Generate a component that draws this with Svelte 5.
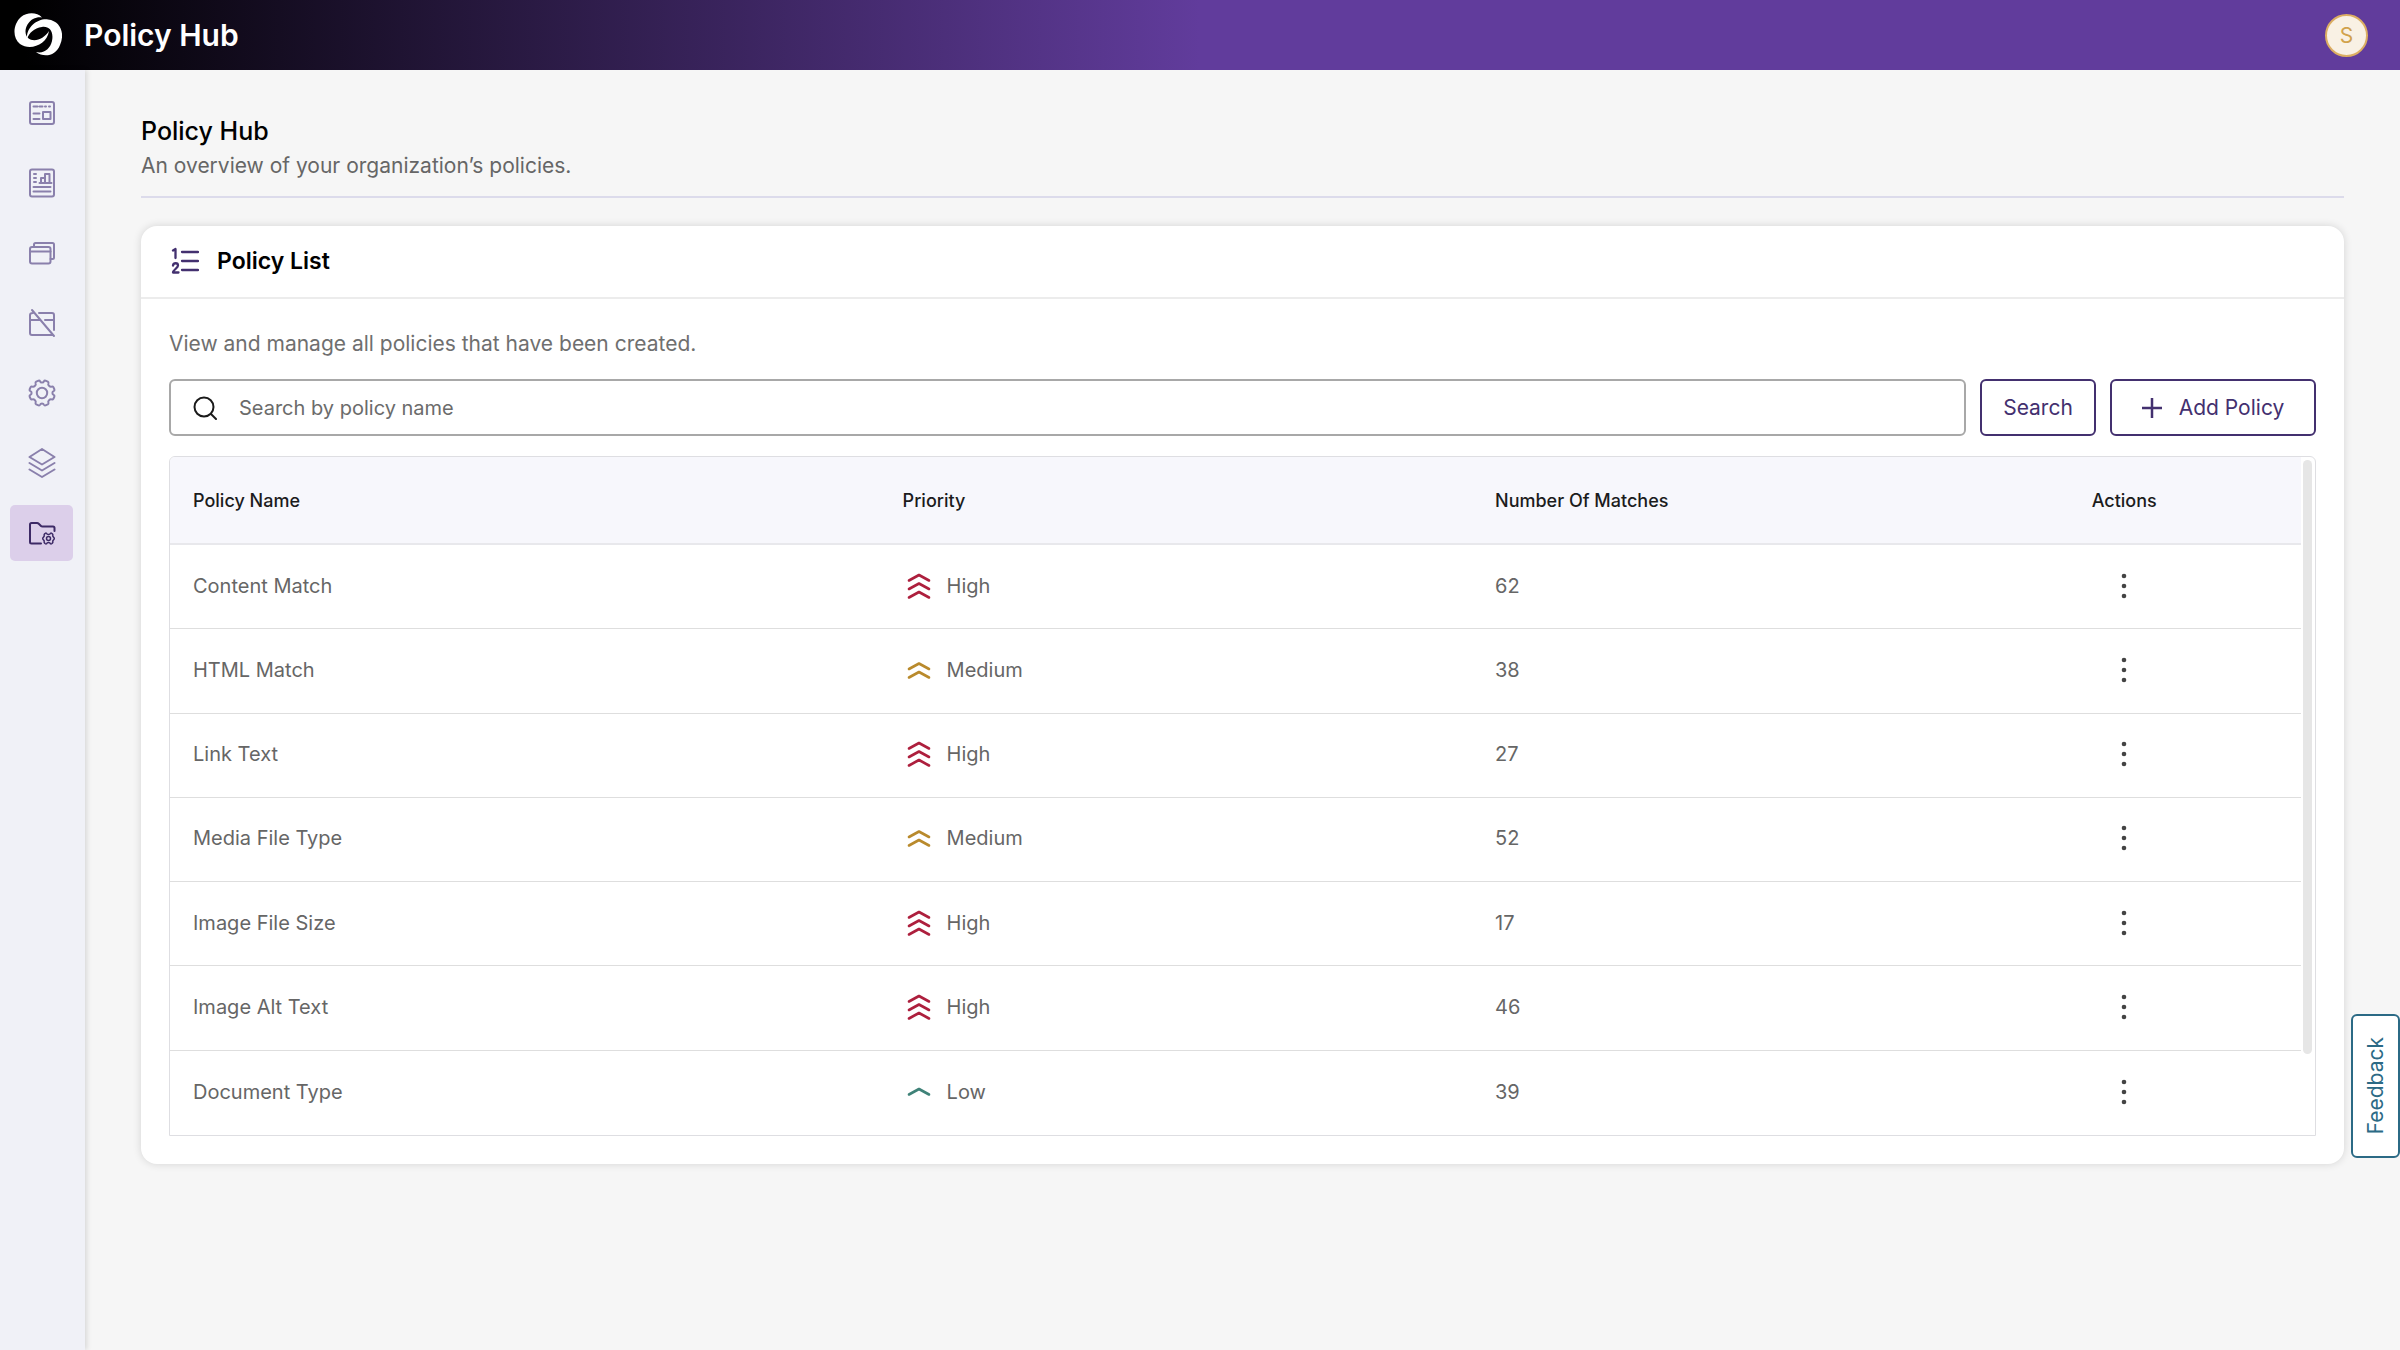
<script>
  const nav = [
    { id: 'dashboard', label: 'Dashboard' },
    { id: 'reports', label: 'Reports' },
    { id: 'pages', label: 'Pages' },
    { id: 'blocked', label: 'Excluded pages' },
    { id: 'settings', label: 'Settings' },
    { id: 'layers', label: 'Layers' },
    { id: 'policies', label: 'Policy Hub', active: true },
  ];

  const policies = [
    { name: 'Content Match', priority: 'High', matches: 62 },
    { name: 'HTML Match', priority: 'Medium', matches: 38 },
    { name: 'Link Text', priority: 'High', matches: 27 },
    { name: 'Media File Type', priority: 'Medium', matches: 52 },
    { name: 'Image File Size', priority: 'High', matches: 17 },
    { name: 'Image Alt Text', priority: 'High', matches: 46 },
    { name: 'Document Type', priority: 'Low', matches: 39 },
  ];

  // One chevron per level, stacked from the top of the icon down.
  const chevrons = { High: [3, 11.5, 20], Medium: [7.5, 16], Low: [11] };
</script>

<div class="app">
  <header class="topbar">
    <svg class="logo" viewBox="0 0 48 44" aria-hidden="true">
      <path d="M28 4.500C23-1 13-1 7 4C-1 11-2 25 6 31C16 38 33 32 35 18C30 26 20 30 14 25C9 20 12 10 19 6C22 4.500 25 4 28 4.500Z" />
      <path d="M13 26C12 14 24 5 34 6.500C47 8 51 21 46 32C42 43 30 45 22 39C30 41 36 36 38 28C40 18 35 13 28 14C20 15 15 20 13 26Z" />
    </svg>
    <span class="brand">Policy Hub</span>
    <button class="avatar" aria-label="Account">S</button>
  </header>

  <div class="body">
    <nav class="sidebar" aria-label="Main">
      {#each nav as item (item.id)}
        <a href={`#${item.id}`} class="nav-item" class:active={item.active} aria-label={item.label}>
          <svg viewBox="0 0 28 30" aria-hidden="true">
            {#if item.id === 'dashboard'}
              <rect x="2" y="4" width="24" height="22" rx="2" />
              <path d="M5.500 8.500h4M11.500 8.500h3M17 8.500h1M21 8.500h1M5.500 15.500h6M5.500 21h6M15 14h7.500v7h-7.500z" />
            {:else if item.id === 'reports'}
              <rect x="2" y="1.500" width="24" height="27" rx="2" />
              <path d="M6 6h2M6 10h2M6 14h2M5.500 19h17M5.500 23.500h17M11.500 15h12M13 15v-5h4v5M17 10v-4h4.500v9" />
            {:else if item.id === 'pages'}
              <rect x="2" y="9" width="20.500" height="16.500" rx="2" />
              <path d="M2 13.500h20.500M6 8.500v-2q0-1.500 1.500-1.500h17q1.500 0 1.500 1.500v13q0 1.500-1.500 1.500h-2" />
            {:else if item.id === 'blocked'}
              <path d="M4 2L26 28M11 5H24q2 0 2 2v15M5 5q-3 0-3 2V25q0 2 2 2H24M2 12h9M17 12h9" />
            {:else if item.id === 'settings'}
              <g transform="translate(14 15)">
                <path
                  d="M0-10.400Q-1.500-10.400-1.900-11.600Q-2.400-12.700-3.500-12.400L-5.800-11.400Q-6.800-10.800-6.400-9.700Q-5.800-8.300-7-7.200Q-8.300-5.900-9.700-6.400Q-10.800-6.800-11.400-5.800L-12.400-3.500Q-12.700-2.400-11.600-1.900Q-10.400-1.400-10.400 0Q-10.400 1.400-11.600 1.900Q-12.700 2.400-12.400 3.500L-11.400 5.800Q-10.800 6.800-9.700 6.400Q-8.300 5.900-7 7.200Q-5.800 8.300-6.400 9.700Q-6.800 10.800-5.800 11.400L-3.500 12.400Q-2.400 12.700-1.900 11.600Q-1.400 10.400 0 10.400Q1.400 10.400 1.900 11.600Q2.400 12.700 3.500 12.400L5.800 11.400Q6.800 10.800 6.400 9.700Q5.800 8.300 7 7.200Q8.300 5.900 9.700 6.400Q10.800 6.800 11.400 5.800L12.400 3.500Q12.700 2.400 11.600 1.900Q10.400 1.400 10.400 0Q10.400-1.400 11.600-1.900Q12.700-2.400 12.400-3.500L11.400-5.800Q10.800-6.800 9.700-6.400Q8.300-5.900 7-7.200Q5.800-8.300 6.400-9.700Q6.800-10.800 5.800-11.400L3.500-12.400Q2.400-12.700 1.900-11.600Q1.500-10.400 0-10.400Z"
                />
                <circle r="5.200" />
              </g>
            {:else if item.id === 'layers'}
              <path d="M14 1L26.500 9L14 16.500L1.500 9ZM1.500 15L14 22.500L26.500 15M1.500 21.500L14 29L26.500 21.500" />
            {:else}
              <path d="M13 25.500H3.500Q2 25.500 2 24V6.500Q2 5 3.500 5H9q1 0 2 1l2 2q.5.5 1.500.5H25q1.500 0 1.500 1.500v3" />
              <g class="fine" transform="translate(20.500 20.500)">
                <path d="M-1.500-4.500Q-2-6-3.500-5L-4.300-4Q-4-2.200-5-1.400Q-6.600 0-5 1.400Q-4 2.200-4.300 4L-3.500 5Q-2 6-1.500 4.500Q0 3.400 1.500 4.500Q2 6 3.500 5L4.300 4Q4 2.200 5 1.400Q6.600 0 5-1.400Q4-2.200 4.300-4L3.500-5Q2-6 1.500-4.500Q0-3.400-1.500-4.500Z" />
                <circle r="2" />
              </g>
            {/if}
          </svg>
        </a>
      {/each}
    </nav>

    <main>
      <div class="intro">
        <h1>Policy Hub</h1>
        <p>An overview of your organization’s policies.</p>
      </div>

      <section class="card" aria-labelledby="list-title">
        <div class="card-head">
          <svg class="list-icon" viewBox="0 0 28 28" aria-hidden="true">
            <path d="M2 3.500L4.500 2V11M2 18.500C2.500 15.500 7 15.500 7 18.500C7 21 2 23 2 25.500H7.500M11 5H27M11 14H27M11 23H27" />
          </svg>
          <h2 id="list-title">Policy List</h2>
        </div>

        <div class="card-body">
          <p class="lead">View and manage all policies that have been created.</p>

          <form class="tools" onsubmit={(e) => e.preventDefault()}>
            <label class="search">
              <svg viewBox="0 0 24 24" aria-hidden="true">
                <circle cx="11" cy="11" r="9.500" />
                <path d="M18 18L23 23" />
              </svg>
              <input type="text" placeholder="Search by policy name" aria-label="Search by policy name" />
            </label>
            <button class="btn" type="submit">Search</button>
            <button class="btn add" type="button">
              <svg viewBox="0 0 20 20" aria-hidden="true"><path d="M10 0V20M0 10H20" /></svg>
              Add Policy
            </button>
          </form>

          <div class="table-box">
            <table>
              <thead>
                <tr>
                  <th class="c-name" scope="col">Policy Name</th>
                  <th class="c-priority" scope="col">Priority</th>
                  <th class="c-matches" scope="col">Number Of Matches</th>
                  <th scope="col">Actions</th>
                </tr>
              </thead>
              <tbody>
                {#each policies as p (p.name)}
                  <tr>
                    <td>{p.name}</td>
                    <td>
                      <span class="priority">
                        <svg class={p.priority.toLowerCase()} viewBox="0 0 24 28" aria-hidden="true">
                          {#each chevrons[p.priority] as y}
                            <path d={`M2 ${y + 5.5}L12 ${y}L22 ${y + 5.5}`} />
                          {/each}
                        </svg>
                        {p.priority}
                      </span>
                    </td>
                    <td>{p.matches}</td>
                    <td>
                      <button class="more" aria-label={`Actions for ${p.name}`}>
                        <svg viewBox="0 0 6 26" aria-hidden="true">
                          <circle cx="3" cy="3" r="2.300" />
                          <circle cx="3" cy="13" r="2.300" />
                          <circle cx="3" cy="23" r="2.300" />
                        </svg>
                      </button>
                    </td>
                  </tr>
                {/each}
              </tbody>
            </table>
            <div class="scroll-track"><div class="scroll-thumb"></div></div>
          </div>
        </div>
      </section>
    </main>
  </div>

  <button class="feedback">Feedback</button>
</div>

<style>
  :global(body) {
    background: #f6f6f6;
  }
  .app {
    min-height: 100vh;
    display: flex;
    flex-direction: column;
    font-family: Inter, 'Liberation Sans', sans-serif;
    color: #666;
  }
  .app :global(*) {
    box-sizing: border-box;
  }
  h1,
  h2,
  p {
    margin: 0;
  }
  button,
  input {
    font: inherit;
    color: inherit;
    background: none;
    border: 0;
    padding: 0;
  }
  svg {
    fill: none;
    stroke: currentColor;
    stroke-width: 2;
    stroke-linecap: round;
    stroke-linejoin: round;
    flex: none;
  }
  .topbar {
    height: 70px;
    display: flex;
    align-items: center;
    padding: 0 32px 0 14px;
    background: linear-gradient(90deg, #000 1%, #613c9c 50%);
    color: #fff;
  }
  .logo {
    width: 48px;
    height: 44px;
    fill: #fff;
    stroke: none;
  }
  .brand {
    margin-left: 22px;
    font-size: 30px;
    font-weight: 600;
  }
  .avatar {
    margin-left: auto;
    width: 43px;
    height: 43px;
    border-radius: 50%;
    border: 2px solid #dcae62;
    background: #f9f1e4;
    color: #d1a24c;
    font-size: 21px;
  }
  .body {
    flex: 1;
    display: flex;
  }
  .sidebar {
    width: 85px;
    flex: none;
    display: flex;
    flex-direction: column;
    gap: 14px;
    padding: 15px 10px;
    background: #f0f1f7;
    box-shadow: 2px 0 5px rgba(0, 0, 0, 0.12);
  }
  .nav-item {
    width: 63px;
    height: 56px;
    display: grid;
    place-items: center;
    border-radius: 5px;
    color: #8a80ac;
  }
  .nav-item svg {
    width: 28px;
    height: 30px;
  }
  .nav-item.active {
    background: #dccfea;
    color: #3d2a66;
  }
  .fine {
    stroke-width: 1.5;
  }
  main {
    flex: 1;
    min-width: 0;
    padding: 44px 56px;
  }
  .intro {
    border-bottom: 2px solid #dcdbeb;
    padding-bottom: 12px;
    margin-bottom: 28px;
  }
  h1 {
    font-size: 25px;
    line-height: 34px;
    font-weight: 500;
    color: #000;
  }
  .intro p {
    font-size: 21px;
    line-height: 36px;
  }
  .card {
    background: #fff;
    border-radius: 16px;
    box-shadow: 0 0 8px rgba(0, 0, 0, 0.14);
  }
  .card-head {
    height: 73px;
    display: flex;
    align-items: center;
    gap: 18px;
    padding: 0 30px 2px;
    border-bottom: 2px solid #ececec;
  }
  .list-icon {
    width: 28px;
    height: 28px;
    color: #43306f;
    stroke-width: 2.3;
  }
  h2 {
    font-size: 23px;
    font-weight: 600;
    color: #000;
  }
  .card-body {
    padding: 28px;
  }
  .lead {
    font-size: 21px;
    line-height: 34px;
    margin-bottom: 18px;
    color: #6f6f6f;
  }
  .tools {
    display: flex;
    gap: 14px;
    height: 57px;
    margin-bottom: 20px;
  }
  .search {
    flex: 1;
    display: flex;
    align-items: center;
    gap: 22px;
    padding: 0 22px;
    border: 2px solid #a8a8a8;
    border-radius: 6px;
  }
  .search svg {
    width: 24px;
    height: 24px;
    color: #1a1a1a;
  }
  .search input {
    flex: 1;
    font-size: 20px;
    outline: 0;
  }
  .search input::placeholder {
    color: #6b6b6b;
    opacity: 1;
  }
  .btn {
    display: flex;
    align-items: center;
    justify-content: center;
    width: 116px;
    border: 2px solid #43306f;
    border-radius: 6px;
    color: #43306f;
    font-size: 21px;
  }
  .btn.add {
    width: 206px;
    gap: 17px;
  }
  .btn svg {
    width: 20px;
    height: 20px;
    stroke-width: 2.5;
    stroke-linecap: butt;
  }
  .table-box {
    display: flex;
    border: 1px solid #dedee2;
    border-radius: 6px 6px 0 0;
    overflow: hidden;
  }
  table {
    flex: 1;
    height: 678px;
    border-collapse: separate;
    border-spacing: 0;
    table-layout: fixed;
    font-size: 20px;
  }
  th,
  td {
    padding: 0 23px;
    text-align: left;
    border-bottom: 1px solid #dedede;
  }
  tbody tr:last-child td {
    border-bottom: 0;
  }
  th {
    height: 88px;
    background: #f7f7fc;
    border-bottom: 2px solid #e8e8ec;
    font-size: 18px;
    font-weight: 500;
    color: #1c1c1c;
  }
  td {
    height: 84px;
    padding-bottom: 2px;
  }
  .c-name {
    width: 33.3%;
  }
  .c-priority {
    width: 27.8%;
  }
  .c-matches {
    width: 28%;
  }
  .priority {
    display: flex;
    align-items: center;
    gap: 16px;
    padding-left: 4px;
  }
  .priority svg {
    width: 24px;
    height: 28px;
    stroke-width: 2.6;
  }
  .high {
    color: #ad1f3d;
  }
  .medium {
    color: #b98a2c;
  }
  .low {
    color: #3f8278;
  }
  .more {
    display: grid;
    place-items: center;
    width: 64px;
    height: 40px;
  }
  .more svg {
    width: 6px;
    height: 26px;
    fill: #444;
    stroke: none;
  }
  .scroll-track {
    width: 14px;
    flex: none;
    padding: 3px 3px 0 2px;
  }
  .scroll-thumb {
    height: 88%;
    border-radius: 5px;
    background: #e6e6e6;
  }
  .feedback {
    position: fixed;
    right: 0;
    top: 1014px;
    width: 49px;
    height: 144px;
    writing-mode: sideways-lr;
    display: flex;
    align-items: center;
    justify-content: center;
    border: 2px solid #2b6a85;
    border-radius: 6px;
    background: #fff;
    color: #2b6a85;
    font-size: 21px;
  }
</style>
